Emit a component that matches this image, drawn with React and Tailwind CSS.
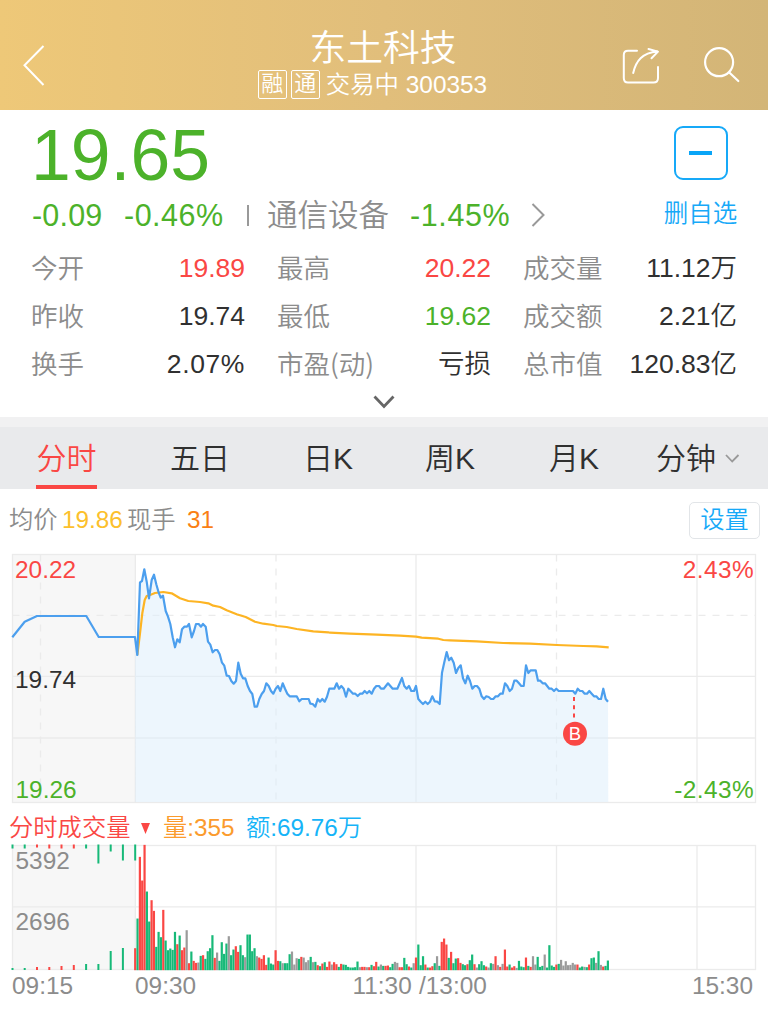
import React from "react";

const GREEN = "#17b978";
const RED = "#fa4744";
const GRAY = "#9b9b9b";
const BAR_COLORS = { g: GREEN, r: RED, n: GRAY };

// One entry per traded minute: direction and bar height in thirds of a pixel.
const VOLUME = `r66 g155 r340 r269 r376 g236 g146 r210 r178 g70 g115 g99 r181 g89 g60 g65 g61 g115 r78 g104
r60 r68 n120 r21 g56 r28 r22 n23 g43 r45 g34 g57 g66 g105 r37 n53 g28 g84 g49 g80
n102 g45 g62 r72 r55 g75 g45 n39 g107 g107 g57 g66 n42 r38 r34 r45 r16 g38 g20 g17
r60 r28 g27 n21 g21 g21 g48 n56 n17 n36 g34 r40 n38 n24 n30 g40 n24 g25 r15 g12
r20 g24 r10 r26 n17 r24 r18 g10 r19 g17 g16 g10 g8 g8 g9 g26 n9 r10 r10 n9
r9 g16 r12 r25 g11 n17 g13 r13 r14 g9 g19 n25 n22 r9 r9 g37 g18 r11 g8 n21
r38 g77 g15 g42 r17 g8 r8 r12 g21 n42 g13 r85 r95 r77 g37 r55 g21 g35 r36 r22
g18 g15 r18 g30 g47 r18 n8 g18 g27 g15 r11 n8 g21 n19 r42 n15 r10 n19 r62 r11
g17 r8 r12 n7 g28 g11 g9 r38 g13 r10 n42 n17 g40 g10 g13 n47 g8 g75 g14 g10
r17 g19 n31 n14 n27 n15 n16 n22 n17 r17 g8 g11 n10 g9 r17 g36 g38 n22 g57 n16
r11 g13 g29`.split(/\s+/).map((s) => ({ c: s[0], h: Number(s.slice(1)) / 3 }));

const seg = (ox, oy, list) =>
  list.trim().split(/\s+/).map((p) => {
    const [x, y] = p.split(",").map(Number);
    return [ox + x / 3, oy + y / 3];
  });

const PRE = seg(0, 495, "37,427 74,380 111,363 259,363 296,426 405,426");
const PRICE = [
  ...seg(130, 550, `15,262 22,315 30,97 36,93 43,58 50,95 57,145 65,90 72,74 79,103 86,128 92,143 99,137 107,183 114,200 121,222 128,262 135,292 142,268 149,277 156,238 163,230 171,230 177,222 185,262 192,243 198,222 206,222 213,230 219,222 227,230 234,275 241,284 248,307 255,300 262,300 269,313 276,338 283,347 290,377 297,378 304,393 311,401 318,393 325,338 332,371 339,385 346,385 353,408 360,423 367,432 374,470 381,470 388,447 395,432 402,423 409,400 416,408 423,423 430,431 437,416 444,408 451,423 458,400 465,416 472,431 479,439 500,439 508,454 515,447 536,447`),
  ...seg(310, 620, `1,251 8,252 16,260 23,237 30,245 37,237 44,245 51,230 58,206 73,206 80,190 87,206 94,198 101,206 108,230 115,206 122,214 129,221 136,221 143,228 150,221 157,221 164,213 171,220 178,213 185,221 192,206 199,198 207,198 213,206 221,206 234,190 248,206 262,206 276,174 283,198 290,206 297,198 304,213 312,213 318,198 325,237 332,245 339,252 346,245 353,252 360,245 367,229 374,244 382,245 389,252 396,158 403,127 410,96 417,121`),
  ...seg(450, 620, `4,113 11,128 18,159 25,144 32,136 39,175 46,190 53,167 60,183 67,206 74,198 81,198 88,206 95,229 102,237 109,229 116,231 123,237 130,237 137,229 144,229 151,221 158,221 165,190 172,198 179,213 186,206 193,182 200,182 207,190 214,198 221,198 228,136 235,159 242,151 257,151 264,182 271,182 278,190 285,190 298,206 305,206 312,213 319,206 326,213 369,213 376,221 383,206 390,213 397,213 404,221 411,221 418,213 425,221 432,229 439,229 446,237 453,237 460,206 467,237 474,245`),
];
const AVG = [
  ...seg(130, 550, `22,315 30,250 37,190 44,150 50,138 62,134 75,129 100,126 125,130 150,145 175,153 210,156 235,160 250,167 270,171 290,181 320,193 347,201 375,215 400,221 430,225 440,228 470,231 500,237 550,244 595,247`),
  ...seg(310, 620, "60,38 120,41 200,44 270,47 318,50 335,53 385,56 400,60"),
  ...seg(450, 620, "0,61 80,64 160,69 240,71 320,75 400,78 440,79 476,82"),
];
const pts = (a) => a.map(([x, y]) => `${x.toFixed(1)},${y.toFixed(1)}`).join(" ");

// Call-auction ticks: [x, colour, height at top, height at bottom]
const AUCTION = [
  [12.5, "g", 4, 2], [24.7, "g", 4, 2], [37, "r", 3, 3], [49.3, "r", 4, 3], [61.5, "r", 4, 4], [73.8, "r", 4, 5],
  [86.1, "g", 4, 6], [98.4, "g", 19, 6], [110.7, "g", 7, 19], [122.9, "g", 16, 22], [135.2, "g", 16, 0],
];

const QUOTES = [
  [["今开", "19.89", "text-[#fa4744]"], ["最高", "20.22", "text-[#fa4744]"], ["成交量", "11.12万", "text-[#303030]"]],
  [["昨收", "19.74", "text-[#303030]"], ["最低", "19.62", "text-[#4cb22a]"], ["成交额", "2.21亿", "text-[#303030]"]],
  [["换手", "2.07%", "text-[#303030] tracking-[0.6px]"], ["市盈(动)", "亏损", "text-[#303030]"], ["总市值", "120.83亿", "text-[#303030]"]],
];
const COLS = ["w-[214px]", "w-[214px] ml-[32px]", "w-[214px] ml-[32px]"];

function Header() {
  return (
    <header className="flex h-[110px] items-start justify-between bg-linear-to-r from-[#eec878] via-[#e1be7b] to-[#d3b577] text-white">
      <svg className="mt-[44px] ml-[22px] h-[43px] w-[24px]" viewBox="0 0 24 43" fill="none" stroke="white" strokeWidth="2">
        <path d="M21.5 2L2.5 21.3L21.5 41" />
      </svg>
      <div className="ml-[99px] flex w-[300px] flex-col items-center pt-[27px]">
        <h1 className="h-[42px] text-[36.8px] leading-[43px] whitespace-nowrap">东土科技</h1>
        <div className="mr-[21px] flex h-[30px] items-center text-[24.4px] leading-[30px] whitespace-nowrap">
          <span className="mr-1 flex size-[29px] items-center justify-center rounded-[2px] border border-white text-[22px]">融</span>
          <span className="mr-[6px] flex size-[29px] items-center justify-center rounded-[2px] border border-white text-[22px]">通</span>
          <span className="pt-[2px]">交易中 300353</span>
        </div>
      </div>
      <div className="mt-[44px] mr-[26px] flex gap-[41px]">
        <svg className="h-[42px] w-[40px]" viewBox="0 0 40 42" fill="none" stroke="white" strokeWidth="2" strokeLinecap="round" strokeLinejoin="round">
          <path d="M16 6.7H7Q2.8 6.7 2.8 11V34Q2.8 38.6 7 38.6H32.5Q37 38.6 37 34V23" />
          <path d="M12.2 29C15 17 21 9 36.5 7.6M27.5 5L37 7.6L30.5 14.2" />
        </svg>
        <svg className="h-[42px] w-[40px]" viewBox="0 0 40 42" fill="none" stroke="white" strokeWidth="2.2" strokeLinecap="round">
          <circle cx="17.1" cy="18.2" r="14" />
          <path d="M27.3 28.5L36.3 37" />
        </svg>
      </div>
    </header>
  );
}

function Summary() {
  return (
    <section className="flex h-[134px] justify-between">
      <div className="ml-[32px]">
        <div className="-ml-px mt-[9px] h-[72px] text-[71.5px] leading-[72px] text-[#4cb22a]">19.65</div>
        <div className="mt-[6px] flex h-[36px] items-center text-[30.5px] leading-[36px] whitespace-nowrap text-[#4cb22a]">
          <span className="w-[92px] tracking-[0.2px]">-0.09</span>
          <span className="w-[123px] tracking-[0.5px]">-0.46%</span>
          <span className="mr-[18px] h-[21px] w-[2px] bg-[#999]" />
          <span className="w-[143px] text-[#8c8c8c]">通信设备</span>
          <span className="w-[121px] tracking-[0.6px]">-1.45%</span>
          <svg className="h-[24px] w-[15px]" viewBox="0 0 15 24" fill="none" stroke="#999" strokeWidth="2">
            <path d="M1.5 1L12.5 12L1.5 23" />
          </svg>
        </div>
      </div>
      <div className="mr-[30px] flex w-[75px] flex-col items-center">
        <button className="mt-[16px] flex size-[54px] items-center justify-center rounded-[9px] border-2 border-[#16a9f8]">
          <span className="h-[4px] w-[23px] bg-[#09a5f7]" />
        </button>
        <span className="mt-[18px] text-[24.5px] leading-[31px] whitespace-nowrap text-[#16a9f8]">删自选</span>
      </div>
    </section>
  );
}

function Quotes() {
  return (
    <section className="h-[173px]">
      {QUOTES.map((row, i) => (
        <div key={i} className="flex h-[48px] pl-[31px] text-[26.5px] leading-[48px] whitespace-nowrap">
          {row.map(([label, value, color], j) => (
            <div key={label} className={"flex justify-between " + COLS[j]}>
              <span className="font-['Noto_Sans_CJK_SC',sans-serif] leading-[45px] text-[#8c8c8c]">{label}</span>
              <span className={color}>{value}</span>
            </div>
          ))}
        </div>
      ))}
      <div className="flex justify-center pt-[5px]">
        <svg className="h-[18px] w-[26px]" viewBox="0 0 26 18" fill="none" stroke="#666" strokeWidth="2.8">
          <path d="M3.5 3.5L13 13.5L22.5 3.5" />
        </svg>
      </div>
    </section>
  );
}

function Tabs() {
  return (
    <nav className="h-[72px] border-t-10 border-[#f1f1f2] bg-[#e9eaec]">
      <div className="flex h-[62px] pl-[36px] text-[30px] leading-[64px] whitespace-nowrap text-[#303030]">
        <span className="flex w-[61px] flex-col items-center border-b-4 border-[#fa4744] text-[#fa4744]">分时</span>
        <span className="ml-[73px] w-[60px]">五日</span>
        <span className="ml-[73px] w-[50px]">日K</span>
        <span className="ml-[72px] w-[50px]">周K</span>
        <span className="ml-[74px] w-[50px]">月K</span>
        <span className="ml-[57px] w-[60px]">分钟</span>
        <svg className="mt-[26px] ml-[8px] h-[12px] w-[17px]" viewBox="0 0 17 12" fill="none" stroke="#999" strokeWidth="1.8">
          <path d="M2 2L8.2 8.5L14.5 2" />
        </svg>
      </div>
    </nav>
  );
}

const AXIS = "text-[24.4px]";

function PriceChart() {
  return (
    <svg className="block h-[265px] w-[768px]" viewBox="0 546 768 265">
      <rect x="12" y="555" width="123.5" height="247" fill="#f7f7f7" />
      <g stroke="#ebebeb" strokeWidth="1.3" fill="none">
        <rect x="12.5" y="554.5" width="743" height="248" />
        <path d="M12.5 676.3H755.5M12.5 738H755.5M135.3 554.5V802.5M416 554.5V802.5M697 554.5V802.5" />
        <path strokeDasharray="7 7" d="M12.5 615.3H755.5M40.5 554.5V802.5M276 554.5V802.5M556.5 554.5V802.5" />
      </g>
      <polygon points={`135.3,802 ${pts(PRICE)} 608.3,802`} fill="#dfeffc" fillOpacity="0.56" />
      <g fill="none" strokeWidth="2.2" strokeLinejoin="round">
        <polyline points={pts(AVG)} stroke="#fdb423" />
        <polyline points={pts([...PRE, ...PRICE])} stroke="#4c9fee" />
      </g>
      <path d="M574 697V718" stroke="#fa4744" strokeWidth="2" strokeDasharray="4 4.3" />
      <circle cx="575" cy="733.7" r="12" fill="#fa4744" />
      <text x="575" y="740.4" fill="white" textAnchor="middle" className="text-[18.5px]">B</text>
      <g className={AXIS}>
        <text x="15" y="578" fill="#fa4744">20.22</text>
        <text x="15" y="688" fill="#303030">19.74</text>
        <text x="15.5" y="798" fill="#4cb22a">19.26</text>
        <text x="754" y="578" fill="#fa4744" textAnchor="end" className="tracking-[0.4px]">2.43%</text>
        <text x="754" y="798" fill="#4cb22a" textAnchor="end" className="tracking-[0.4px]">-2.43%</text>
      </g>
    </svg>
  );
}

function VolumeChart() {
  return (
    <svg className="block h-[192px] w-[768px]" viewBox="0 843 768 192">
      <rect x="12" y="846" width="123.5" height="123" fill="#f7f7f7" />
      <g stroke="#ebebeb" strokeWidth="1.3" fill="none">
        <rect x="12.5" y="845.5" width="743" height="124" />
        <path d="M12.5 906.8H755.5M135.3 845.5V969.5M276 845.5V969.5M416 845.5V969.5M556.5 845.5V969.5M697 845.5V969.5" />
      </g>
      {AUCTION.map(([x, c, top, bottom]) => (
        <g key={x} fill={BAR_COLORS[c]}>
          <rect x={x - 1} y="844.5" width="2" height={top} />
          <rect x={x - 1} y={970 - bottom} width="2" height={bottom} />
        </g>
      ))}
      {VOLUME.map(({ c, h }, i) => (
        <rect key={i} x={134.1 + i * 2.34} y={970.2 - h} width="2.2" height={h} fill={BAR_COLORS[c]} />
      ))}
      <g className={AXIS} fill="#8c8c8c">
        <text x="15.5" y="868.7">5392</text>
        <text x="15.5" y="930">2696</text>
        <text x="12" y="993.5">09:15</text>
        <text x="135" y="993.5">09:30</text>
        <text x="352.5" y="993.5">11:30</text>
        <text x="419" y="993.5">/13:00</text>
        <text x="753" y="993.5" textAnchor="end">15:30</text>
      </g>
    </svg>
  );
}

export default function App() {
  return (
    <main className="h-[1035px] w-[768px] overflow-hidden bg-white font-['Liberation_Sans','Noto_Sans_CJK_SC',sans-serif] font-[350]">
      <Header />
      <Summary />
      <Quotes />
      <Tabs />
      <div className="flex h-[57px] items-center pt-[5px] pr-[8px] pl-[9px] text-[24.3px] leading-[32px] whitespace-nowrap">
        <span className="w-[53px] text-[#8c8c8c]">均价</span>
        <span className="w-[65px] text-[#fcc02c]">19.86</span>
        <span className="w-[60px] text-[#8c8c8c]">现手</span>
        <span className="text-[#fa7f14]">31</span>
        <button className="ml-auto flex h-[37px] w-[71px] items-center justify-center rounded-[5px] border border-[#e2e5e8] text-[#16a9f8]">设置</button>
      </div>
      <PriceChart />
      <div className="flex h-[32px] items-center pl-[9px] text-[24.3px] leading-[32px] whitespace-nowrap">
        <span className="w-[132px] pt-px text-[#fa4744]">分时成交量</span>
        <svg className="mt-[3px] h-[11px] w-[9px]" viewBox="0 0 9 11"><path d="M0 0H9L4.5 11Z" fill="#fa4744" /></svg>
        <span className="ml-[13px] w-[83px] pt-px text-[#fb9b2d]">量:355</span>
        <span className="pt-px text-[#16b4f8]">额:69.76万</span>
      </div>
      <VolumeChart />
    </main>
  );
}
